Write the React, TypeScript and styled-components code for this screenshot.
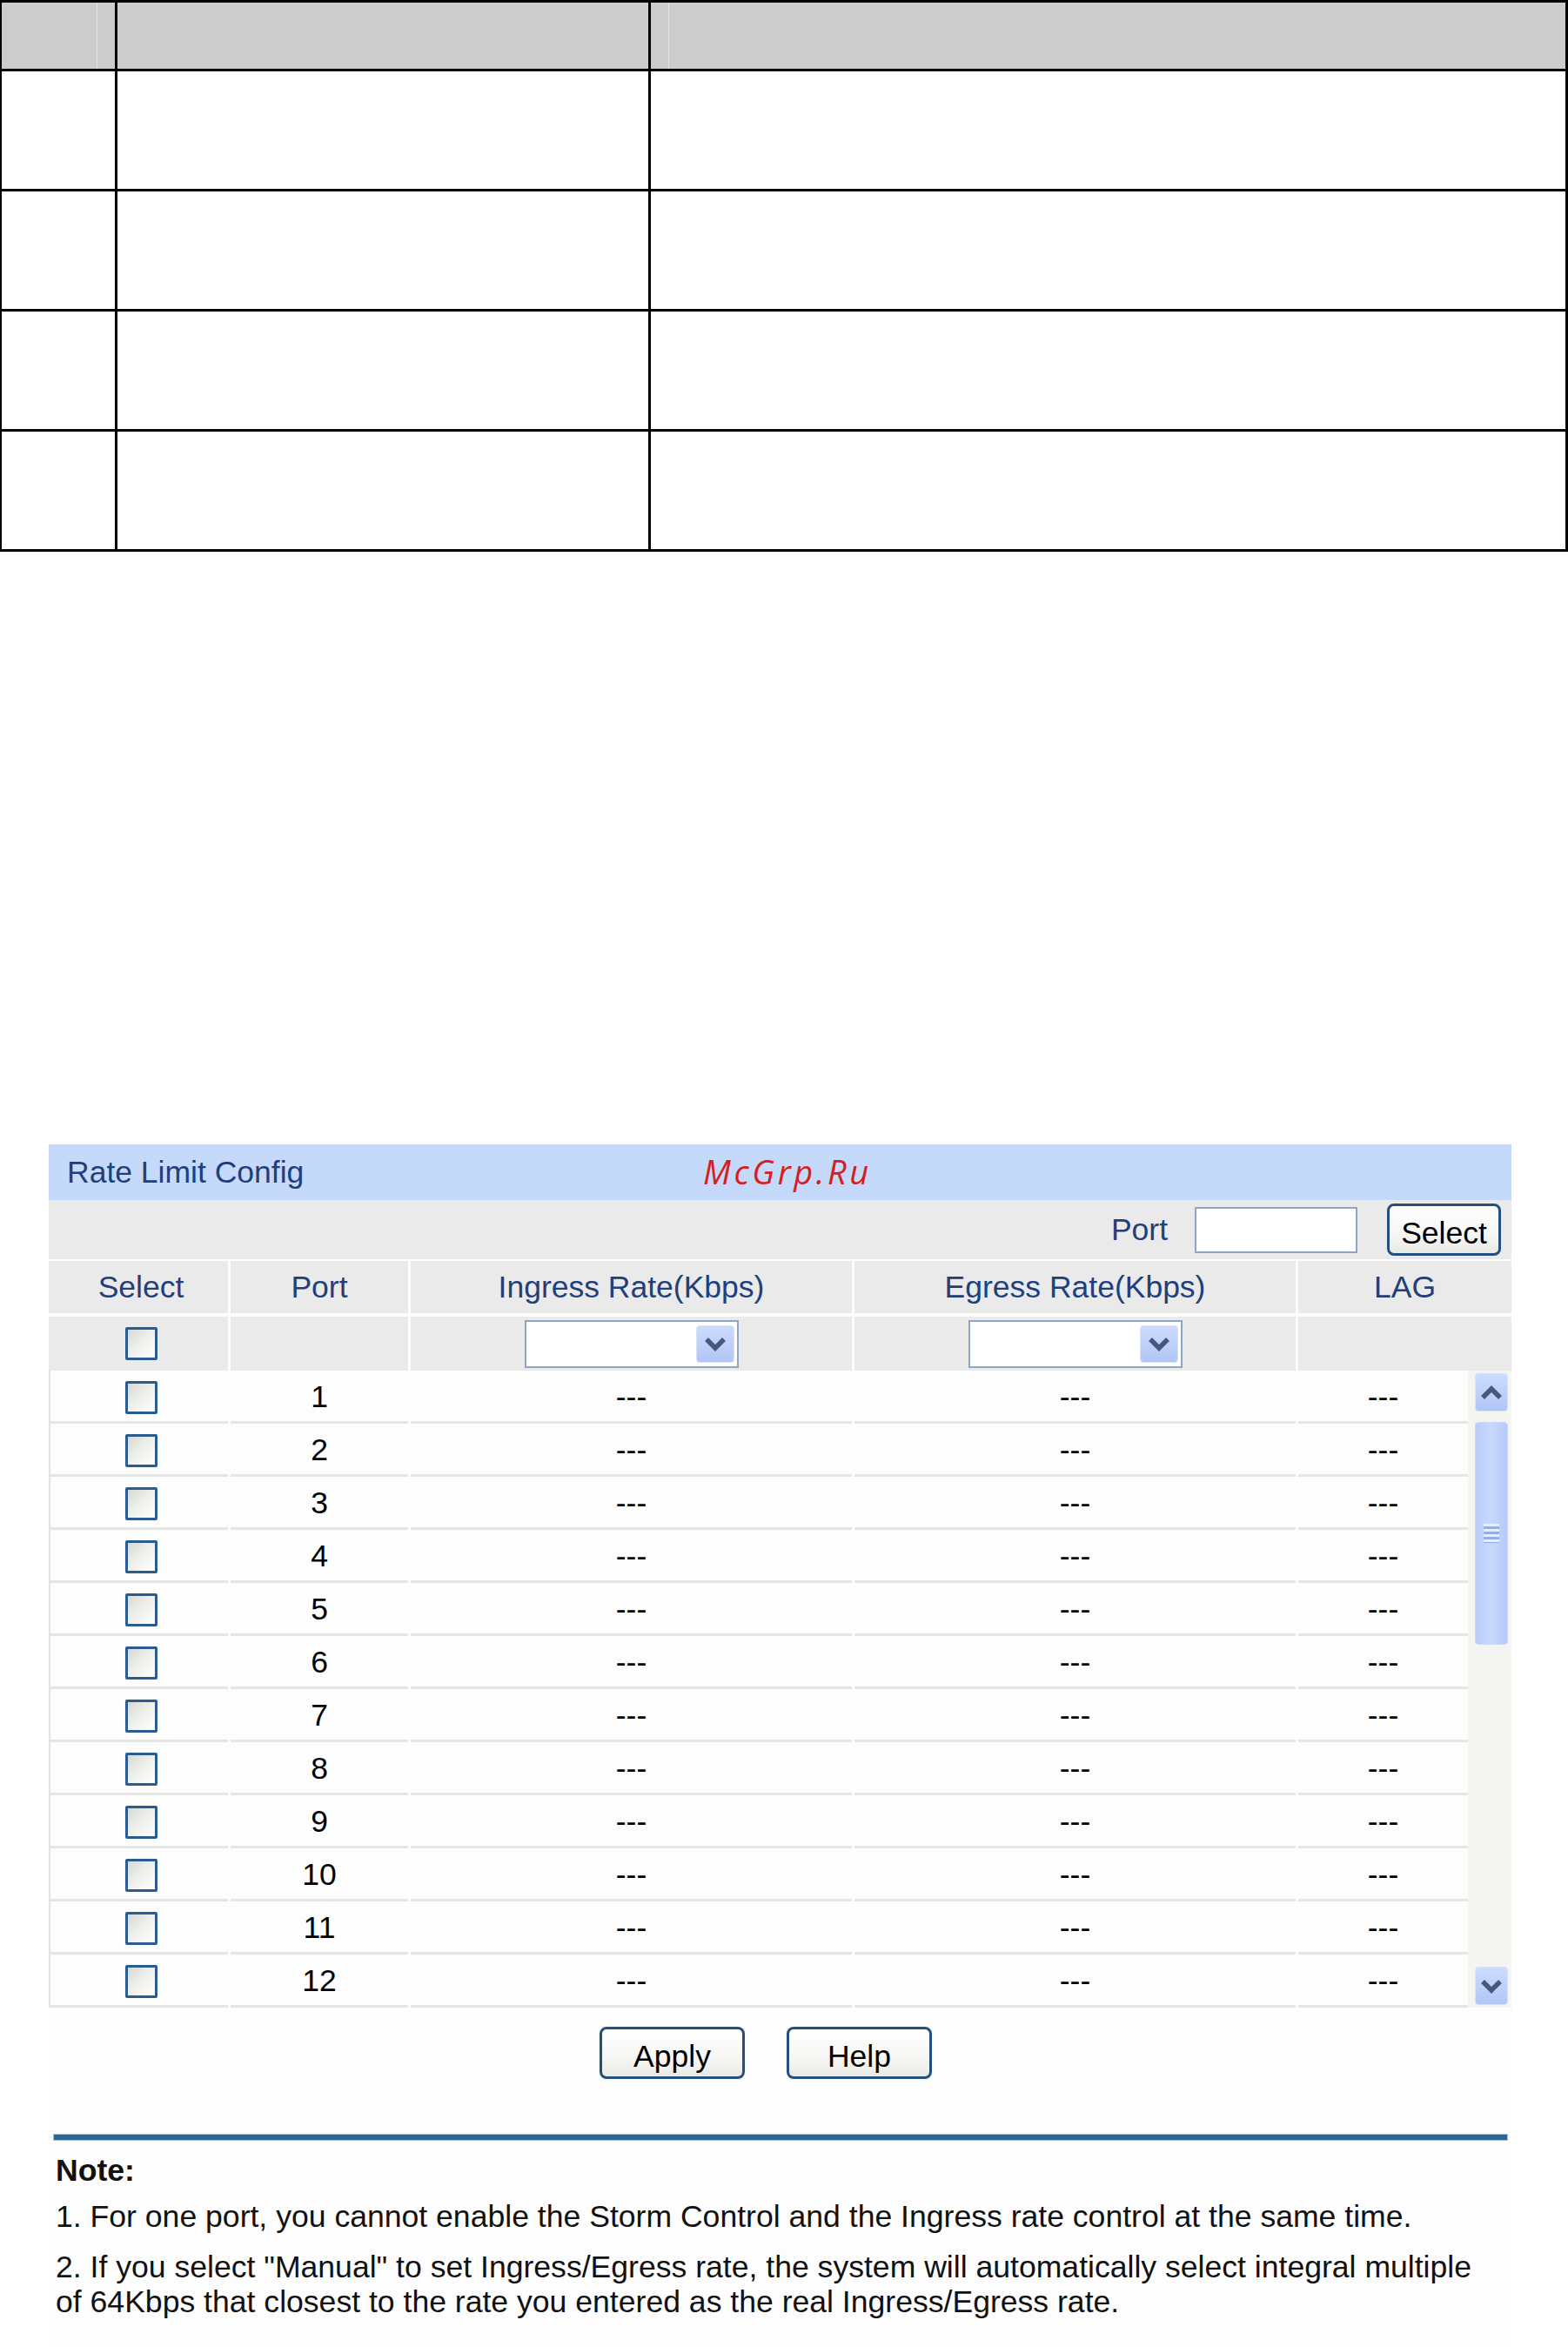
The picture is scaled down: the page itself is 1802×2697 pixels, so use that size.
import React from 'react';
import styled, { createGlobalStyle } from 'styled-components';

const GlobalStyle = createGlobalStyle`
  html, body {
    margin: 0;
    padding: 0;
    background: #ffffff;
  }
  body {
    font-family: "Liberation Sans", Arial, sans-serif;
  }
`;

const Page = styled.div`
  width: 1802px;
  min-height: 2697px;
  background: #ffffff;
`;

/* blank spec table at the top of the page */
const SpecGrid = styled.div`
  width: 1802px;
  box-sizing: border-box;
  display: grid;
  grid-template-columns: 133px 613px 1054px;
  border-top: 3px solid #000;
  border-left: 2px solid #000;
`;

const SpecCell = styled.div<{ $head?: boolean; $col: number }>`
  box-sizing: border-box;
  height: ${(p) => (p.$head ? 79 : 138)}px;
  border-right: 3px solid #000;
  border-bottom: 3px solid #000;
  background: ${(p) => (p.$head ? '#cccccc' : '#ffffff')};
  box-shadow: ${(p) =>
    p.$head && p.$col === 0
      ? 'inset -20px 0 0 #cccccc, inset -21px 0 0 #e2e2e2'
      : p.$head && p.$col === 2
      ? 'inset 20px 0 0 #cccccc, inset 21px 0 0 #e2e2e2'
      : 'none'};
`;

/* rate limit panel */
const Panel = styled.section`
  width: 1681px;
  margin: 681px 0 0 56px;
  background: #fdfdfd;
`;

const TitleBar = styled.div`
  position: relative;
  height: 64px;
  background: #c5d9fb;
  display: flex;
  align-items: center;
  padding-left: 21px;
  font-size: 35.5px;
  color: #213f7a;
`;

const Watermark = styled.span`
  position: absolute;
  left: 752px;
  top: 50%;
  transform: translateY(-52%);
  font-family: "Open Sans", "DejaVu Sans", sans-serif;
  font-style: italic;
  font-size: 38px;
  letter-spacing: 3.6px;
  color: #d51e1e;
`;

const Toolbar = styled.div`
  height: 68px;
  background: #eaeaea;
  display: flex;
  justify-content: flex-end;
  align-items: center;
  padding-right: 12px;
`;

const ToolLabel = styled.span`
  font-size: 35.5px;
  color: #213f7a;
  margin-right: 31px;
`;

const PortInput = styled.div`
  box-sizing: border-box;
  width: 187px;
  height: 53px;
  border: 2px solid #8ba7c4;
  background: #ffffff;
  margin-right: 34px;
`;

const PushButton = styled.button<{ $w: number }>`
  box-sizing: border-box;
  width: ${(p) => p.$w}px;
  height: 60px;
  padding: 8px 0 0;
  border: 3px solid #24507f;
  border-radius: 8px;
  background: linear-gradient(180deg, #ffffff 0%, #f6f6f4 60%, #e9e9e4 100%);
  font-family: "Liberation Sans", Arial, sans-serif;
  font-size: 35.5px;
  color: #000000;
  line-height: 40px;
`;

const HeadRow = styled.div<{ $gapTop: number }>`
  display: grid;
  grid-template-columns: 206px 204px 507px 507px 245px;
  column-gap: 3px;
  margin-top: ${(p) => p.$gapTop}px;
`;

const HeadCell = styled.div<{ $h: number; $sel?: boolean }>`
  height: ${(p) => p.$h}px;
  background: #eaeaea;
  display: flex;
  align-items: center;
  justify-content: center;
  padding-left: ${(p) => (p.$sel ? 6 : 0)}px;
  font-size: 35.5px;
  color: #213f7a;
`;

const Body = styled.div`
  display: flex;
`;

const DataList = styled.div`
  width: 1631px;
  box-sizing: border-box;
  border-left: 2px solid #e2e2e2;
`;

const DataRow = styled.div`
  display: grid;
  grid-template-columns: 204px 204px 507px 507px 195px;
  column-gap: 3px;
`;

const DataCell = styled.div<{ $sel?: boolean }>`
  box-sizing: border-box;
  height: 61px;
  padding-top: 3px;
  border-bottom: 3px solid #e5e5e5;
  background: #fdfdfd;
  display: flex;
  align-items: center;
  justify-content: center;
  padding-left: ${(p) => (p.$sel ? 5 : 0)}px;
  font-size: 35.5px;
  color: #000000;
`;

const Checkbox = styled.span`
  box-sizing: border-box;
  display: block;
  width: 37px;
  height: 38px;
  border: 3px solid #2a5c8f;
  border-radius: 2px;
  background: linear-gradient(135deg, #d9d9d3 0%, #eeeeea 45%, #ffffff 100%);
`;

const DropBox = styled.div`
  box-sizing: border-box;
  width: 246px;
  height: 55px;
  border: 2px solid #8ba7c4;
  background: #ffffff;
  display: flex;
  justify-content: flex-end;
  align-items: center;
  padding-right: 3px;
`;

const ArrowButton = styled.div<{ $h: number }>`
  box-sizing: border-box;
  width: ${(p) => (p.$h > 40 && p.$h < 44 ? 44 : 38)}px;
  height: ${(p) => p.$h}px;
  border-radius: 4px;
  border: 1px solid #d6e1fb;
  background: linear-gradient(180deg, #cddbfd 0%, #bfd0fa 50%, #b2c6f6 100%);
  display: flex;
  align-items: center;
  justify-content: center;
`;

const ScrollTrack = styled.div`
  width: 50px;
  box-sizing: border-box;
  background: #f4f4f0;
  padding: 3px 4px 3px 8px;
  display: flex;
  flex-direction: column;
`;

const Thumb = styled.div`
  box-sizing: border-box;
  height: 256px;
  margin-top: 12px;
  border-radius: 4px;
  border: 1px solid #c8d6fa;
  background: linear-gradient(90deg, #bccdfa 0%, #c9d8fd 50%, #b6c9f7 100%);
  display: flex;
  align-items: center;
  justify-content: center;
`;

const Grip = styled.div`
  width: 18px;
  height: 22px;
  background: repeating-linear-gradient(180deg, #e9effe 0px, #e9effe 3px, #93acec 3px, #93acec 6px);
`;

const Spacer = styled.div`
  flex: 1;
`;

const ButtonRow = styled.div`
  display: flex;
  justify-content: center;
  gap: 48px;
  padding: 22px 33px 0 0;
`;

const NoteRule = styled.div`
  width: 1670px;
  height: 6px;
  margin: 64px 0 0 6px;
  background: #2b6596;
  box-shadow: 0 0 0 1px #a9c2da;
`;

const Note = styled.div`
  margin: 15px 0 0 8px;
  font-size: 35.6px;
  line-height: 40px;
  color: #111111;
  padding-bottom: 40px;
`;

const NoteTitle = styled.div`
  font-weight: bold;
`;

const NoteItem = styled.p<{ $top: number }>`
  margin: ${(p) => p.$top}px 0 0;
`;

const Chevron: React.FC<{ up?: boolean }> = ({ up }) => (
  <svg width="28" height="18" viewBox="0 0 28 18">
    <polyline
      points={up ? '4,15 14,5 24,15' : '4,4 14,14 24,4'}
      fill="none"
      stroke="#46587e"
      strokeWidth="5.5"
      strokeLinejoin="miter"
    />
  </svg>
);

const ports = Array.from({ length: 12 }, (_, i) => i + 1);

const App: React.FC = () => {
  return (
    <Page>
      <GlobalStyle />
      <SpecGrid>
        {[0, 1, 2].map((c) => (
          <SpecCell key={`h${c}`} $head $col={c} />
        ))}
        {[0, 1, 2, 3].map((r) =>
          [0, 1, 2].map((c) => <SpecCell key={`${r}-${c}`} $col={c} />)
        )}
      </SpecGrid>

      <Panel>
        <TitleBar>
          Rate Limit Config
          <Watermark>McGrp.Ru</Watermark>
        </TitleBar>
        <Toolbar>
          <ToolLabel>Port</ToolLabel>
          <PortInput />
          <PushButton $w={131}>Select</PushButton>
        </Toolbar>

        <HeadRow $gapTop={2}>
          <HeadCell $h={60} $sel>Select</HeadCell>
          <HeadCell $h={60}>Port</HeadCell>
          <HeadCell $h={60}>Ingress Rate(Kbps)</HeadCell>
          <HeadCell $h={60}>Egress Rate(Kbps)</HeadCell>
          <HeadCell $h={60}>LAG</HeadCell>
        </HeadRow>
        <HeadRow $gapTop={4}>
          <HeadCell $h={62} $sel>
            <Checkbox />
          </HeadCell>
          <HeadCell $h={62} />
          <HeadCell $h={62}>
            <DropBox>
              <ArrowButton $h={43}>
                <Chevron />
              </ArrowButton>
            </DropBox>
          </HeadCell>
          <HeadCell $h={62}>
            <DropBox>
              <ArrowButton $h={43}>
                <Chevron />
              </ArrowButton>
            </DropBox>
          </HeadCell>
          <HeadCell $h={62} />
        </HeadRow>

        <Body>
          <DataList>
            {ports.map((n) => (
              <DataRow key={n}>
                <DataCell $sel>
                  <Checkbox />
                </DataCell>
                <DataCell>{n}</DataCell>
                <DataCell>---</DataCell>
                <DataCell>---</DataCell>
                <DataCell>---</DataCell>
              </DataRow>
            ))}
          </DataList>
          <ScrollTrack>
            <ArrowButton $h={44}>
              <Chevron up />
            </ArrowButton>
            <Thumb>
              <Grip />
            </Thumb>
            <Spacer />
            <ArrowButton $h={44}>
              <Chevron />
            </ArrowButton>
          </ScrollTrack>
        </Body>

        <ButtonRow>
          <PushButton $w={167}>Apply</PushButton>
          <PushButton $w={167}>Help</PushButton>
        </ButtonRow>

        <NoteRule />
        <Note>
          <NoteTitle>Note:</NoteTitle>
          <NoteItem $top={13}>
            1. For one port, you cannot enable the Storm Control and the Ingress rate control at the same time.
          </NoteItem>
          <NoteItem $top={18}>
            2. If you select "Manual" to set Ingress/Egress rate, the system will automatically select integral multiple
            <br />
            of 64Kbps that closest to the rate you entered as the real Ingress/Egress rate.
          </NoteItem>
        </Note>
      </Panel>
    </Page>
  );
};

export default App;
